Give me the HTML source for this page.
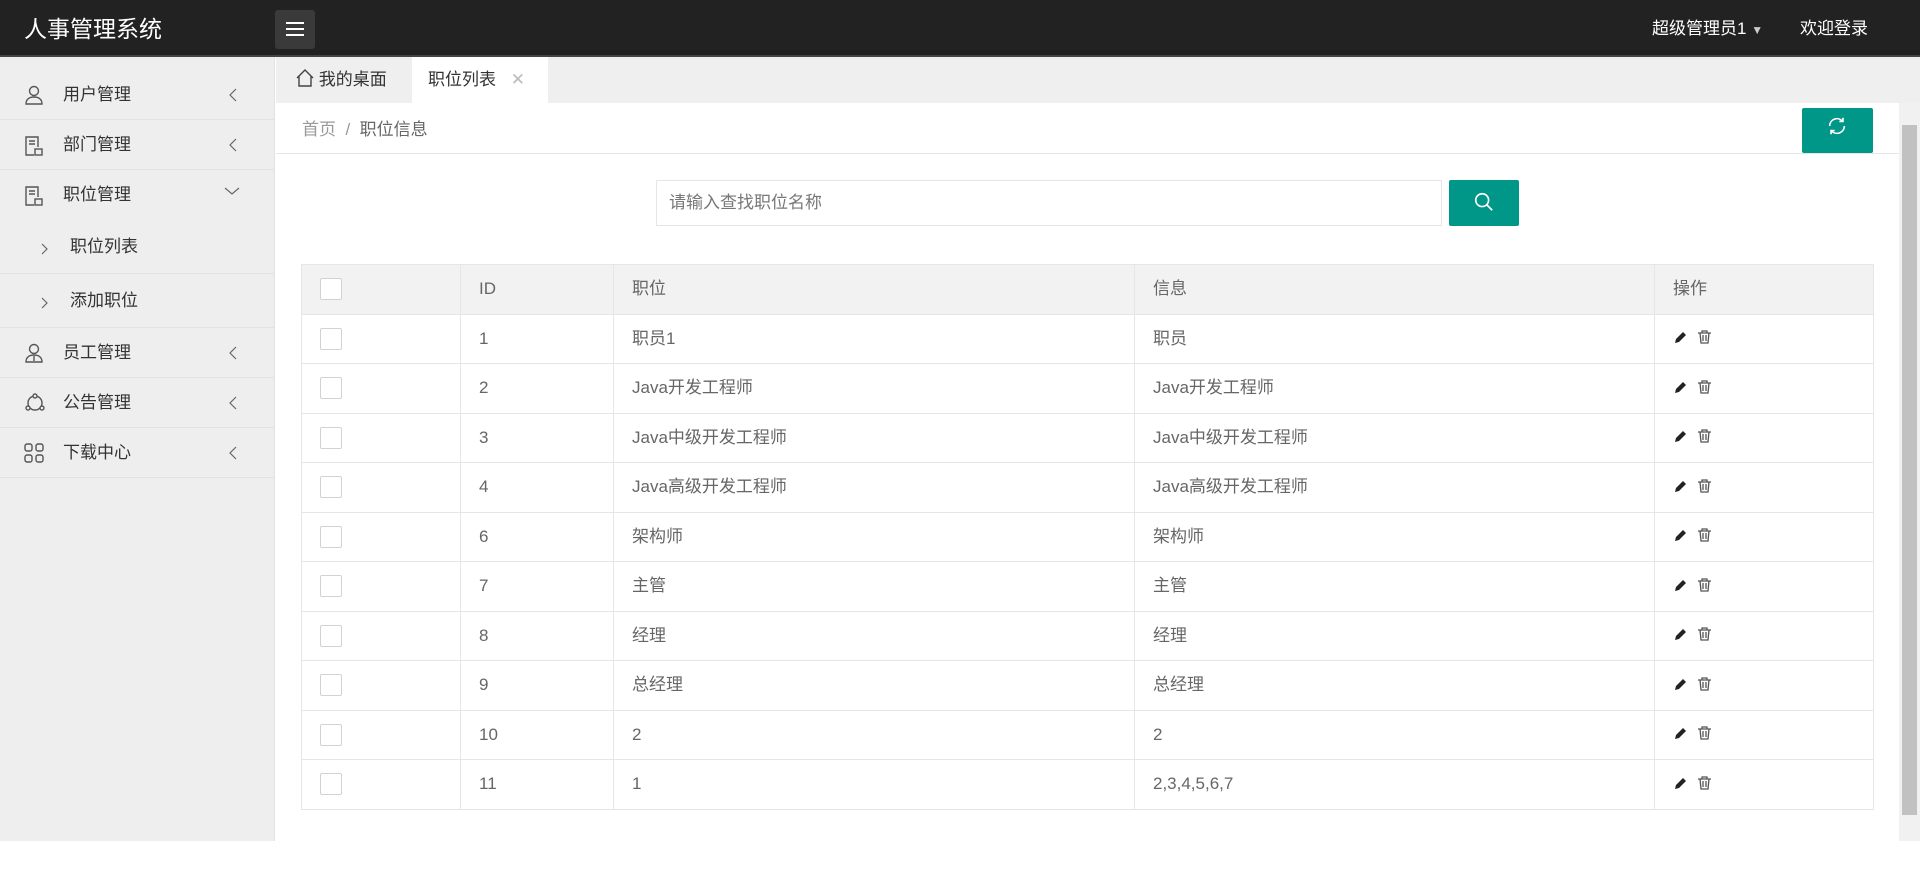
<!DOCTYPE html>
<html><head><meta charset="utf-8"><style>
*{box-sizing:border-box;margin:0;padding:0}
body{width:1920px;height:891px;overflow:hidden;background:#fff;font-family:"Liberation Sans","Noto Sans CJK SC",sans-serif;color:#333;position:relative}
.top{position:absolute;left:0;top:0;width:1920px;height:57px;background:#222;border-bottom:2px solid #444}
.logo{position:absolute;left:24px;top:17px;color:#fff;font-size:23px;line-height:24px}
.menu{position:absolute;left:275px;top:10px;width:40px;height:39px;background:#3a3a3a;border-radius:3px}
.menu i{position:absolute;left:11px;width:18px;height:2px;background:#fff}
.tr{position:absolute;top:20px;color:#fff;font-size:17px;line-height:18px}
.side{position:absolute;left:0;top:57px;width:275px;height:784px;background:#eee;border-right:1px solid #e2e2e2;padding-top:13px}
.it{height:50px;border-bottom:1px solid #e2e2e2;position:relative;font-size:17px;color:#333;line-height:50px;padding-left:63px}
.it svg{position:absolute;left:24px;top:15px}
.it svg.ar{left:228px;top:18px}
.sub{height:54px;line-height:54px;padding-left:70px;position:relative;font-size:17px;border-bottom:1px solid #e2e2e2}
.sub svg{position:absolute;left:40px;top:23px}
.tabs{position:absolute;left:276px;top:57px;width:1644px;height:46px;background:#efefef}
.tab{position:absolute;top:0;height:46px;line-height:46px;font-size:17px;color:#333}
.crumb{position:absolute;left:276px;top:103px;width:1623px;height:51px;border-bottom:1px solid #e6e6e6;background:#fff}
.btn{background:#009688;position:absolute;border-radius:2px}
.inp{position:absolute;left:656px;top:180px;width:786px;height:46px;border:1px solid #e6e6e6;font-size:17px;color:#777;line-height:44px;padding-left:12px}
table{position:absolute;left:301px;top:264px;width:1573px;border-collapse:collapse;font-size:17px;color:#666}
td,th{border:1px solid #e6e6e6;height:49.5px;padding:0 0 0 18px;text-align:left;font-weight:normal;line-height:20px;vertical-align:middle}
th{background:#f2f2f2;color:#666}
.cb{display:inline-block;width:22px;height:22px;border:1px solid #d2d2d2;background:#fff;vertical-align:middle;border-radius:2px}
.sb{position:absolute;left:1899px;top:103px;width:21px;height:738px;background:#f1f1f1}
.sb div{position:absolute;left:3px;top:22px;width:15px;height:690px;background:#c1c1c1}
</style></head><body>
<div class="top">
<div class="logo">人事管理系统</div>
<div class="menu"><i style="top:12px"></i><i style="top:18px"></i><i style="top:24px"></i></div>
<div class="tr" style="left:1652px">超级管理员1 <span style="font-size:12px;color:#ccc">▼</span></div>
<div class="tr" style="left:1800px">欢迎登录</div>
</div>
<div class="side">
<div class="it"><svg width="20" height="20" viewBox="0 0 20 20" fill="none" stroke="#555" stroke-width="1.4"><circle cx="10" cy="6" r="4.5"/><path d="M2 19c0-5 3.5-7 8-7s8 2 8 7z"/></svg>用户管理<svg class="ar" width="10" height="14" viewBox="0 0 10 14" fill="none" stroke="#666" stroke-width="1.2"><path d="M8 1L2 7l6 6"/></svg></div>
<div class="it"><svg width="20" height="22" viewBox="0 0 20 22" fill="none" stroke="#555" stroke-width="1.4"><path d="M14 12V2H2v18h8"/><path d="M5 6h6M5 9h6"/><rect x="11" y="14" width="7" height="6"/></svg>部门管理<svg class="ar" width="10" height="14" viewBox="0 0 10 14" fill="none" stroke="#666" stroke-width="1.2"><path d="M8 1L2 7l6 6"/></svg></div>
<div class="it" style="border:none"><svg width="20" height="22" viewBox="0 0 20 22" fill="none" stroke="#555" stroke-width="1.4"><path d="M14 12V2H2v18h8"/><path d="M5 6h6M5 9h6"/><rect x="11" y="14" width="7" height="6"/></svg>职位管理<svg class="ar" width="16" height="10" viewBox="0 0 16 10" fill="none" stroke="#666" stroke-width="1.2" style="left:224px;top:16px"><path d="M1 2l7 6 7-6"/></svg></div>
<div class="sub"><svg width="8" height="12" viewBox="0 0 8 12" fill="none" stroke="#666" stroke-width="1.2"><path d="M2 1l5 5-5 5"/></svg>职位列表</div>
<div class="sub"><svg width="8" height="12" viewBox="0 0 8 12" fill="none" stroke="#666" stroke-width="1.2"><path d="M2 1l5 5-5 5"/></svg>添加职位</div>
<div class="it"><svg width="20" height="20" viewBox="0 0 20 20" fill="none" stroke="#555" stroke-width="1.4"><circle cx="10" cy="6" r="4.5"/><path d="M2 19c0-5 3.5-7 8-7s8 2 8 7z M10 13v5"/></svg>员工管理<svg class="ar" width="10" height="14" viewBox="0 0 10 14" fill="none" stroke="#666" stroke-width="1.2"><path d="M8 1L2 7l6 6"/></svg></div>
<div class="it"><svg width="22" height="20" viewBox="0 0 22 20" fill="none" stroke="#555" stroke-width="1.4"><circle cx="11" cy="10" r="7"/><circle cx="11" cy="3" r="2" fill="#eee"/><circle cx="4" cy="15" r="2" fill="#eee"/><circle cx="18" cy="15" r="2" fill="#eee"/></svg>公告管理<svg class="ar" width="10" height="14" viewBox="0 0 10 14" fill="none" stroke="#666" stroke-width="1.2"><path d="M8 1L2 7l6 6"/></svg></div>
<div class="it"><svg width="20" height="20" viewBox="0 0 20 20" fill="none" stroke="#555" stroke-width="1.4"><rect x="1" y="1" width="7" height="7" rx="2"/><rect x="12" y="1" width="7" height="7" rx="2"/><rect x="1" y="12" width="7" height="7" rx="2"/><rect x="12" y="12" width="7" height="7" rx="2"/></svg>下载中心<svg class="ar" width="10" height="14" viewBox="0 0 10 14" fill="none" stroke="#666" stroke-width="1.2"><path d="M8 1L2 7l6 6"/></svg></div>
</div>
<div class="tabs">
<div class="tab" style="left:20px"><svg width="18" height="18" viewBox="0 0 18 18" fill="none" stroke="#444" stroke-width="1.4" style="vertical-align:-2px"><path d="M1 9L9 1l8 8M3 7v10h12V7"/></svg> 我的桌面</div>
<div class="tab" style="left:136px;width:136px;background:#fff;padding-left:16px">职位列表 <span style="color:#bbb;margin-left:10px">✕</span></div>
</div>
<div class="crumb"><span style="position:absolute;left:26px;top:17px;font-size:17px;line-height:20px;color:#999">首页 &nbsp;/&nbsp; <span style="color:#666">职位信息</span></span></div>
<div class="btn" style="left:1802px;top:108px;width:71px;height:45px"><svg width="22" height="22" viewBox="0 0 24 24" style="position:absolute;left:24px;top:7px" fill="none" stroke="#fff" stroke-width="1.8"><path d="M4 12a8 8 0 0 1 14-5.3M20 12a8 8 0 0 1-14 5.3"/><path d="M18.5 3v4h-4M5.5 21v-4h4"/></svg></div>
<div class="inp">请输入查找职位名称</div>
<div class="btn" style="left:1449px;top:180px;width:70px;height:46px"><svg width="22" height="22" viewBox="0 0 24 24" style="position:absolute;left:24px;top:11px" fill="none" stroke="#fff" stroke-width="1.8"><circle cx="10" cy="10" r="7"/><path d="M15 15l6 6"/></svg></div>
<table>
<tr><th style="width:159px"><span class="cb"></span></th><th style="width:153px">ID</th><th style="width:521px">职位</th><th style="width:520px">信息</th><th>操作</th></tr>
<tr><td><span class="cb"></span></td><td>1</td><td>职员1</td><td>职员</td><td class="op"></td></tr>
<tr><td><span class="cb"></span></td><td>2</td><td>Java开发工程师</td><td>Java开发工程师</td><td class="op"></td></tr>
<tr><td><span class="cb"></span></td><td>3</td><td>Java中级开发工程师</td><td>Java中级开发工程师</td><td class="op"></td></tr>
<tr><td><span class="cb"></span></td><td>4</td><td>Java高级开发工程师</td><td>Java高级开发工程师</td><td class="op"></td></tr>
<tr><td><span class="cb"></span></td><td>6</td><td>架构师</td><td>架构师</td><td class="op"></td></tr>
<tr><td><span class="cb"></span></td><td>7</td><td>主管</td><td>主管</td><td class="op"></td></tr>
<tr><td><span class="cb"></span></td><td>8</td><td>经理</td><td>经理</td><td class="op"></td></tr>
<tr><td><span class="cb"></span></td><td>9</td><td>总经理</td><td>总经理</td><td class="op"></td></tr>
<tr><td><span class="cb"></span></td><td>10</td><td>2</td><td>2</td><td class="op"></td></tr>
<tr><td><span class="cb"></span></td><td>11</td><td>1</td><td>2,3,4,5,6,7</td><td class="op"></td></tr>
</table>
<div class="sb"><div></div></div>
<script>
document.querySelectorAll('.op').forEach(function(t){t.innerHTML='<svg width="44" height="16" viewBox="0 0 44 16" style="vertical-align:middle;position:relative;top:-2px"><path d="M2 14l1-4 7-7 3 3-7 7z" fill="#222"/><g fill="none" stroke="#555" stroke-width="1.3"><path d="M25 4h13M29 4V2h5v2M27 4l1 10h7l1-10M30 6v6M33 6v6"/></g></svg>';});
</script>
</body></html>
